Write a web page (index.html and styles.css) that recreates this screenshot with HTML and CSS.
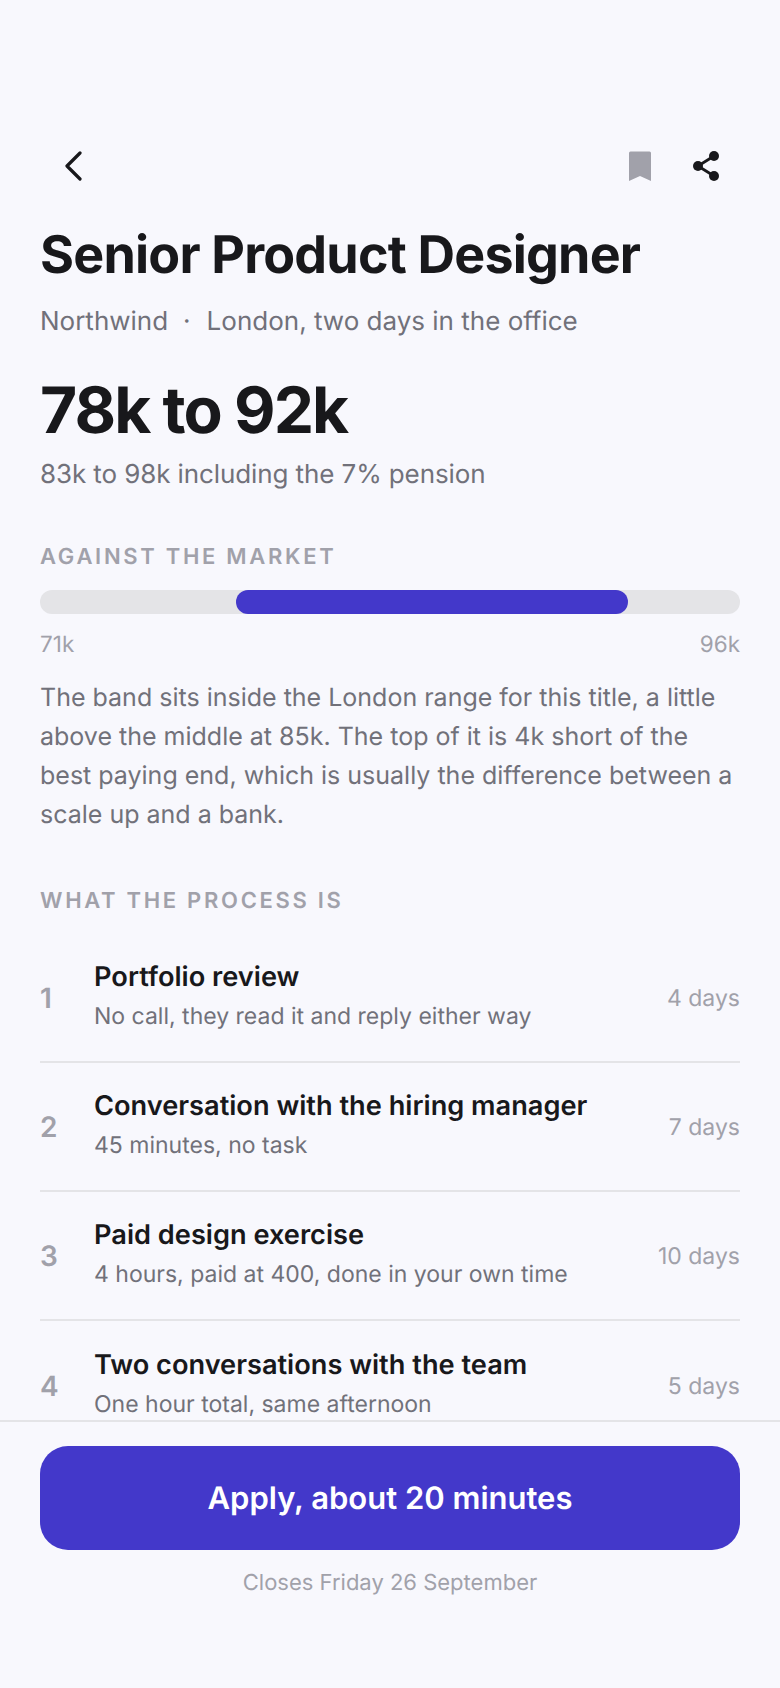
FILE: index.html
```html
<!DOCTYPE html>
<html lang="en">

<head>
  <meta charset="UTF-8">
  <meta name="viewport" content="width=device-width, initial-scale=1.0">
  <title>Senior Product Designer</title>
  <link rel="stylesheet" href="styles.css">
</head>

<body>
  <div class="screen">
    <div class="content">
      <div class="top-bar">
        <button class="icon-btn back-btn" aria-label="Back">
          <svg width="18" height="30" viewBox="0 0 18 30"><path d="M16 2 3 15l13 13" fill="none" stroke="#18181b" stroke-width="3.2" stroke-linecap="round" stroke-linejoin="round"/></svg>
        </button>
        <div class="top-actions">
          <button class="icon-btn" aria-label="Save">
            <svg width="22" height="30" viewBox="0 0 22 30"><path d="M0 2a1.500 1.500 0 0 1 1.500-1.500h19A1.500 1.500 0 0 1 22 2v28l-11-5-11 5z" fill="#a1a1aa"/></svg>
          </button>
          <button class="icon-btn" aria-label="Share">
            <svg width="26" height="30" viewBox="0 0 26 30"><path d="M21 5 5 15l16 10" fill="none" stroke="#18181b" stroke-width="2.800"/><circle cx="21" cy="5" r="5" fill="#18181b"/><circle cx="5" cy="15" r="5" fill="#18181b"/><circle cx="21" cy="25" r="5" fill="#18181b"/></svg>
          </button>
        </div>
      </div>

      <h1 class="job-title">Senior Product Designer</h1>
      <p class="job-meta">Northwind<span class="dot">·</span>London, two days in the office</p>

      <div class="salary">78k to 92k</div>
      <p class="salary-note">83k to 98k including the 7% pension</p>

      <h2 class="section-label market-label">AGAINST THE MARKET</h2>
      <div class="range-track">
        <div class="range-fill"></div>
      </div>
      <div class="range-ends">
        <span>71k</span>
        <span>96k</span>
      </div>
      <p class="market-text">The band sits inside the London range for this title, a little above the middle at 85k. The top of it is 4k short of the best paying end, which is usually the difference between a scale up and a bank.</p>

      <h2 class="section-label process-label">WHAT THE PROCESS IS</h2>
      <ol class="steps">
        <li class="step">
          <span class="step-num">1</span>
          <div class="step-body">
            <div class="step-title">Portfolio review</div>
            <div class="step-desc">No call, they read it and reply either way</div>
          </div>
          <span class="step-time">4 days</span>
        </li>
        <li class="step">
          <span class="step-num">2</span>
          <div class="step-body">
            <div class="step-title">Conversation with the hiring manager</div>
            <div class="step-desc">45 minutes, no task</div>
          </div>
          <span class="step-time">7 days</span>
        </li>
        <li class="step">
          <span class="step-num">3</span>
          <div class="step-body">
            <div class="step-title">Paid design exercise</div>
            <div class="step-desc">4 hours, paid at 400, done in your own time</div>
          </div>
          <span class="step-time">10 days</span>
        </li>
        <li class="step">
          <span class="step-num">4</span>
          <div class="step-body">
            <div class="step-title">Two conversations with the team</div>
            <div class="step-desc">One hour total, same afternoon</div>
          </div>
          <span class="step-time">5 days</span>
        </li>
      </ol>
    </div>

    <div class="footer">
      <button class="apply-btn">Apply, about 20 minutes</button>
      <p class="closes">Closes Friday 26 September</p>
    </div>
  </div>
</body>

</html>
```

FILE: styles.css
```css
* {
  box-sizing: border-box;
}

body {
  margin: 0;
  background-color: #f8f8fd;
  font-family: Inter, "Liberation Sans", sans-serif;
  color: #18181b;
  text-rendering: geometricPrecision;
}

h1,
h2,
p,
ol {
  margin: 0;
  padding: 0;
}

button {
  border: 0;
  padding: 0;
  background: none;
  font-family: inherit;
  text-rendering: inherit;
}

.screen {
  height: 100vh;
  display: flex;
  flex-direction: column;
}

.content {
  flex: 1;
  min-height: 0;
  overflow: hidden;
  padding: 151px 40px 0;
}

.top-bar {
  display: flex;
  justify-content: space-between;
  align-items: center;
  height: 30px;
}

.icon-btn {
  display: flex;
}

.back-btn {
  margin-left: 24px;
}

.top-actions {
  display: flex;
  gap: 42px;
  margin-right: 21px;
}

.job-title {
  margin-top: 42px;
  font-size: 52px;
  line-height: 64px;
  font-weight: 700;
  letter-spacing: -0.8px;
}

.job-meta {
  margin-top: 17px;
  font-size: 26px;
  line-height: 36px;
  color: #71717a;
}

.dot {
  margin: 0 16px 0 15px;
}

.salary {
  margin-top: 33px;
  font-size: 64px;
  line-height: 76px;
  font-weight: 700;
  letter-spacing: -1.92px;
}

.salary-note {
  margin-top: 8px;
  font-size: 26px;
  line-height: 36px;
  letter-spacing: -0.1px;
  color: #71717a;
}

.section-label {
  font-size: 22px;
  line-height: 28px;
  font-weight: 600;
  letter-spacing: 2.7px;
  color: #a1a1aa;
}

.market-label {
  margin-top: 50px;
}

.range-track {
  position: relative;
  margin-top: 19px;
  height: 24px;
  border-radius: 12px;
  background-color: #e4e4e7;
}

.range-fill {
  position: absolute;
  top: 0;
  bottom: 0;
  left: 28%;
  width: 56%;
  border-radius: 12px;
  background-color: #4338ca;
}

.range-ends {
  display: flex;
  justify-content: space-between;
  margin-top: 17px;
  font-size: 22.5px;
  line-height: 28px;
  color: #a1a1aa;
}

.market-text {
  margin-top: 20px;
  font-size: 25px;
  line-height: 39px;
  color: #71717a;
}

.process-label {
  margin-top: 52px;
}

.steps {
  margin-top: 19px;
  list-style: none;
}

.step {
  display: flex;
  align-items: center;
  height: 129px;
  border-bottom: 2px solid #e4e4e7;
}

.step:last-child {
  border-bottom: 0;
}

.step-num {
  width: 54px;
  font-size: 28px;
  font-weight: 600;
  color: #a1a1aa;
}

.step-body {
  flex: 1;
  padding-bottom: 4px;
}

.step-title {
  font-size: 27.2px;
  line-height: 36px;
  font-weight: 600;
}

.step-desc {
  margin-top: 5px;
  font-size: 23px;
  line-height: 32px;
  color: #71717a;
}

.step-time {
  font-size: 23px;
  color: #a1a1aa;
}

.footer {
  border-top: 2px solid #e4e4e7;
  height: 268px;
  padding: 24px 40px 0;
}

.apply-btn {
  display: block;
  width: 100%;
  height: 104px;
  border-radius: 28px;
  background-color: #4338ca;
  color: #fff;
  font-size: 31px;
  font-weight: 600;
}

.closes {
  margin-top: 17px;
  text-align: center;
  font-size: 22px;
  line-height: 32px;
  color: #a1a1aa;
}
```
